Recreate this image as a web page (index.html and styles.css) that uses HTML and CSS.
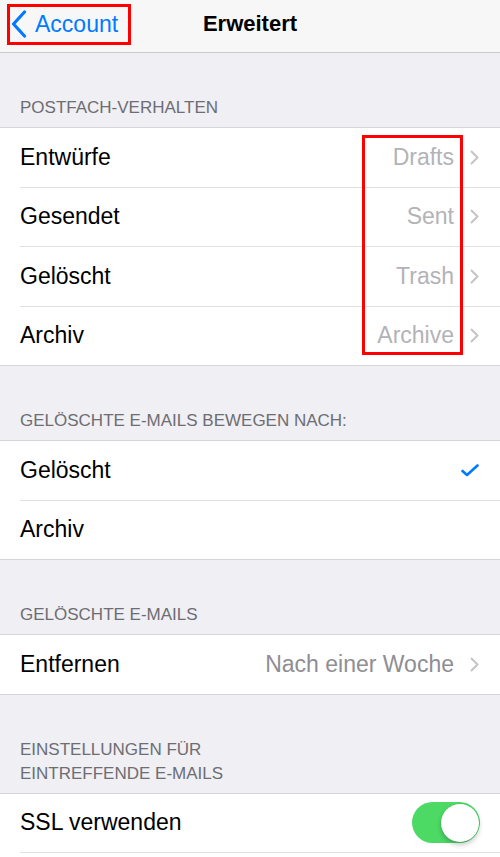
FILE: index.html
```html
<!DOCTYPE html>
<html lang="de">
<head>
	<meta charset="UTF-8">
	<title>Erweitert</title>
	<link rel="stylesheet" href="styles.css">
</head>
<body>

<header class="navbar">
	<a class="back marked">
		<svg class="back-arrow" width="16" height="28" viewBox="0 0 16 28"><path d="M13.5 2 L2.5 14 L13.5 26"/></svg>
		<span>Account</span>
	</a>
	<h1>Erweitert</h1>
	<span></span>
</header>

<section class="group">
	<h2 class="group-title">Postfach-Verhalten</h2>
	<ul class="cells">
		<li class="cell"><span class="label">Entwürfe</span><span class="detail">Drafts</span><svg class="disclosure" viewBox="0 0 9 15"><path d="M1.5 1.5 L7.5 7.5 L1.5 13.5"/></svg></li>
		<li class="cell"><span class="label">Gesendet</span><span class="detail">Sent</span><svg class="disclosure" viewBox="0 0 9 15"><path d="M1.5 1.5 L7.5 7.5 L1.5 13.5"/></svg></li>
		<li class="cell"><span class="label">Gelöscht</span><span class="detail">Trash</span><svg class="disclosure" viewBox="0 0 9 15"><path d="M1.5 1.5 L7.5 7.5 L1.5 13.5"/></svg></li>
		<li class="cell"><span class="label">Archiv</span><span class="detail">Archive</span><svg class="disclosure" viewBox="0 0 9 15"><path d="M1.5 1.5 L7.5 7.5 L1.5 13.5"/></svg></li>
		<li class="mark mark-mailboxes"></li>
	</ul>
</section>

<section class="group">
	<h2 class="group-title">Gelöschte E-Mails bewegen nach:</h2>
	<ul class="cells">
		<li class="cell"><span class="label">Gelöscht</span><svg class="check" viewBox="0 0 18 13"><path d="M1.5 7 L6 11 L16.5 1.5"/></svg></li>
		<li class="cell"><span class="label">Archiv</span></li>
	</ul>
</section>

<section class="group">
	<h2 class="group-title">Gelöschte E-Mails</h2>
	<ul class="cells">
		<li class="cell"><span class="label">Entfernen</span><span class="detail dark">Nach einer Woche</span><svg class="disclosure" viewBox="0 0 9 15"><path d="M1.5 1.5 L7.5 7.5 L1.5 13.5"/></svg></li>
	</ul>
</section>

<section class="group">
	<h2 class="group-title">Einstellungen für<br>eintreffende E-Mails</h2>
	<ul class="cells open">
		<li class="cell"><span class="label">SSL verwenden</span><span class="switch on"><span class="knob"></span></span></li>
	</ul>
</section>

</body>
</html>
```

FILE: styles.css
```css
html
{
	background: #efeff4;
}
body
{
	margin: 0;
	font-family: "Liberation Sans", Arial, sans-serif;
	color: #000;
	-webkit-font-smoothing: antialiased;
}

/* top bar */
.navbar
{
	display: grid;
	grid-template-columns: 1fr auto 1fr;
	align-items: center;
	box-sizing: border-box;
	height: 53px;
	padding-bottom: 4px;
	background: #f7f7f8;
	border-bottom: 1px solid #c9c9cc;
}
.navbar h1
{
	margin: 0;
	font-size: 22px;
	font-weight: bold;
}
.back
{
	position: relative;
	justify-self: start;
	display: flex;
	align-items: center;
	gap: 8px;
	margin-left: 11px;
	color: #007aff;
	font-size: 23px;
}
.back-arrow path
{
	fill: none;
	stroke: #007aff;
	stroke-width: 3.2;
	stroke-linecap: round;
	stroke-linejoin: round;
}
.marked::after
{
	content: "";
	position: absolute;
	left: -4px;
	top: -6px;
	width: 118px;
	height: 35px;
	border: 3px solid #f00;
}

/* grouped table */
.group-title
{
	margin: 43px 0 0;
	padding: 0 20px 7px;
	font-size: 17px;
	line-height: 24px;
	font-weight: normal;
	text-transform: uppercase;
	color: #6d6d72;
}
.cells
{
	position: relative;
	list-style: none;
	margin: 0;
	padding: 0;
	background: #fff;
	border-top: 1px solid #d6d6da;
	border-bottom: 1px solid #d6d6da;
}
.cells.open
{
	border-bottom: none;
	padding-bottom: 4px;
}
.cell
{
	display: flex;
	align-items: center;
	height: 58.5px;
	padding: 0 20px;
	font-size: 23px;
	position: relative;
}
.cell + .cell
{
	border-top: 1px solid #e0e0e3;
	margin-left: 20px;
	padding-left: 0;
}
.open .cell
{
	border-bottom: 1px solid #e0e0e3;
	margin-left: 20px;
	padding-left: 0;
}
.label
{
	flex: 1;
}
.detail
{
	color: #b3b3b7;
	margin-right: 16px;
}
.detail.dark
{
	color: #8e8e93;
}
.disclosure
{
	width: 9px;
	height: 15px;
	margin-right: 1px;
}
.disclosure path
{
	fill: none;
	stroke: #c4c4c8;
	stroke-width: 2;
	stroke-linecap: round;
	stroke-linejoin: round;
}
.check
{
	width: 18px;
	height: 13px;
	margin-right: 1px;
}
.check path
{
	fill: none;
	stroke: #007aff;
	stroke-width: 2.6;
	stroke-linecap: round;
	stroke-linejoin: round;
}

/* switch */
.switch
{
	display: flex;
	justify-content: flex-end;
	align-items: center;
	width: 68px;
	height: 41px;
	border-radius: 21px;
	background: #4cd964;
	box-sizing: border-box;
	padding: 1.5px;
}
.knob
{
	width: 38px;
	height: 38px;
	border-radius: 50%;
	background: #fff;
	box-shadow: 0 3px 5px rgba(0,0,0,0.22), 0 0 0 0.5px rgba(0,0,0,0.08);
}

/* highlight frame over the mailbox values */
.mark-mailboxes
{
	position: absolute;
	left: 362px;
	top: 7px;
	width: 95px;
	height: 214px;
	border: 3px solid #f00;
}
```
